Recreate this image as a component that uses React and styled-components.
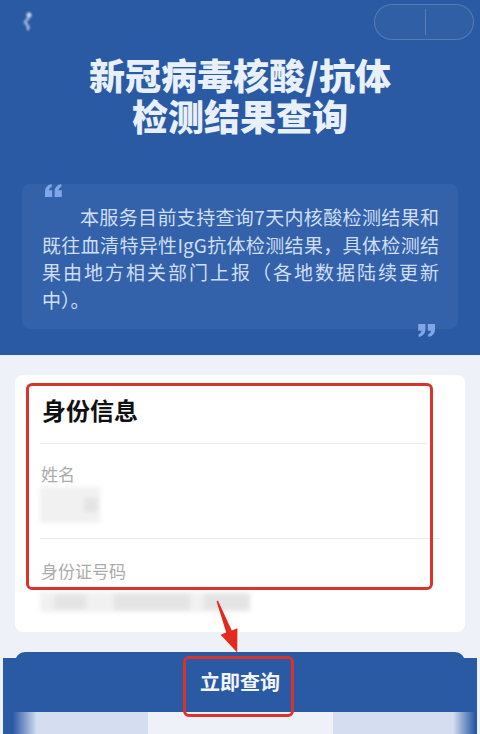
import React from "react";
import styled, { createGlobalStyle } from "styled-components";

const GlobalStyle = createGlobalStyle`
  html, body { margin: 0; padding: 0; }
  body {
    width: 480px;
    height: 734px;
    overflow: hidden;
    background: #eef2f8;
    font-family: "Noto Sans CJK SC", "Noto Sans", sans-serif;
  }
`;

const Page = styled.div`
  position: relative;
  width: 480px;
  height: 734px;
  overflow: hidden;
  background: #eef2f8;
`;

const Header = styled.header`
  background: #2b5aa4;
  height: 355px;
  padding: 0 22px;
  box-sizing: border-box;
  display: flex;
  flex-direction: column;
`;

const TopBar = styled.div`
  height: 44px;
  display: flex;
  align-items: center;
  justify-content: space-between;
  margin-right: -16px;
`;

const Back = styled.div`
  width: 12px;
  height: 22px;
  filter: blur(1.2px);
  opacity: 0.8;
  margin-top: -2px;
`;

const Capsule = styled.div`
  width: 100px;
  height: 36px;
  box-sizing: border-box;
  border-radius: 18px;
  border: 1px solid rgba(255, 255, 255, 0.18);
  background: rgba(255, 255, 255, 0.03);
  display: flex;
  align-items: center;
  justify-content: center;
  padding-left: 2px;
`;

const CapsuleDivider = styled.span`
  width: 1px;
  height: 26px;
  background: rgba(255, 255, 255, 0.2);
`;

const Title = styled.h1`
  margin: 10px 0 0;
  color: #e8f0fb;
  font-size: 36px;
  line-height: 41px;
  font-weight: 900;
  text-align: center;
`;

const QuoteBox = styled.div`
  position: relative;
  margin-top: 48px;
  height: 145px;
  box-sizing: border-box;
  padding: 19px 19px 0 20px;
  border-radius: 8px;
  background: #3362ab;
`;

const QuoteIcon = styled.svg`
  position: absolute;
  ${(p) =>
    p.$end
      ? "left: 395px; top: 139px; transform: rotate(180deg);"
      : "left: 23px; top: 0px;"}
`;

const QuoteText = styled.p`
  margin: 0;
  color: #d0def3;
  font-size: 19px;
  line-height: 27.5px;
  text-align: justify;
  text-indent: 2em;
`;

const Body = styled.main`
  padding: 20px 15px 0;
`;

const Card = styled.section`
  position: relative;
  background: #ffffff;
  border-radius: 8px;
  height: 257px;
  padding: 0 25px 0 25px;
  box-sizing: border-box;
`;

const CardTitle = styled.h2`
  margin: 0 13px 0 0;
  height: 68px;
  display: flex;
  align-items: center;
  padding-left: 2px;
  font-size: 24px;
  font-weight: 700;
  color: #111;
  border-bottom: 1px solid #ececec;
`;

const Field = styled.div`
  padding-top: ${(p) => p.$top}px;
  height: ${(p) => p.$h}px;
  box-sizing: border-box;
  border-bottom: ${(p) => (p.$line ? "1px solid #ececec" : "none")};
`;

const Label = styled.div`
  font-size: 17px;
  line-height: 22px;
  color: #ababab;
  padding-left: 1px;
`;

const Blur = styled.div`
  display: flex;
  margin-top: ${(p) => p.$mt}px;
  height: ${(p) => p.$h}px;
  width: ${(p) => p.$w}px;
  background: #f1f1f1;
  filter: blur(2px);
  align-items: center;
`;

const BlurPiece = styled.span`
  height: ${(p) => p.$h}px;
  width: ${(p) => p.$w}px;
  margin-left: ${(p) => p.$ml}px;
  background: #e4e4e4;
`;

const RedFrame = styled.div`
  position: absolute;
  box-sizing: border-box;
  border: 3px solid #d8342b;
  border-radius: 6px;
  left: ${(p) => p.$x}px;
  top: ${(p) => p.$y}px;
  width: ${(p) => p.$w}px;
  height: ${(p) => p.$h}px;
  pointer-events: none;
`;

const Footer = styled.footer`
  margin: 20px 3px 0;
  padding: 0 12px;
  background: linear-gradient(to bottom, transparent 6px, #2b5aa4 6px);
`;

const Button = styled.button`
  display: flex;
  width: 100%;
  height: 60px;
  align-items: center;
  justify-content: center;
  border: none;
  border-radius: 10px 10px 0 0;
  background: #2b5aa4;
  color: #f2f6fc;
  font-family: "Noto Sans CJK SC", sans-serif;
  font-size: 20px;
  font-weight: 700;
  padding: 0 0 1px;
`;

const BottomStrip = styled.div`
  height: 22px;
  margin: 0 -12px;
  background: linear-gradient(
    to right,
    #2b5aa4 0px,
    #2b5aa4 10px,
    #d4def0 34px,
    #d4def0 145px,
    #eef2f8 145px,
    #eef2f8 330px,
    #d4def0 330px,
    #d4def0 450px,
    #2b5aa4 472px
  );
`;

const ArrowSvg = styled.svg`
  position: absolute;
  left: 0;
  top: 0;
  pointer-events: none;
`;

function Quote({ end }) {
  const d =
    "M0 13 L0 7.5 Q0 1.5 6.5 0 L7 2.6 Q4.2 3.6 3.8 6.2 L7.2 6.2 L7.2 13 Z";
  return (
    <QuoteIcon $end={end} width="18" height="14" viewBox="0 0 18 14">
      <path d={d} fill="#7fa7e8" />
      <path d={d} fill="#7fa7e8" transform="translate(9.6 0)" />
    </QuoteIcon>
  );
}

export default function App() {
  return (
    <Page>
      <GlobalStyle />
      <Header>
        <TopBar>
          <Back>
            <svg width="12" height="22" viewBox="0 0 12 22">
              <circle cx="7" cy="5" r="2.5" fill="#fff" />
              <path d="M8 6 L3 12 L7 18" stroke="#c9d6f0" strokeWidth="2.5" fill="none" />
              <circle cx="6" cy="19" r="1.2" fill="#fff" />
            </svg>
          </Back>
          <Capsule>
            <CapsuleDivider />
          </Capsule>
        </TopBar>
        <Title>
          新冠病毒核酸/抗体
          <br />
          检测结果查询
        </Title>
        <QuoteBox>
          <Quote />
          <QuoteText>
            本服务目前支持查询7天内核酸检测结果和既往血清特异性IgG抗体检测结果，具体检测结果由地方相关部门上报（各地数据陆续更新中）。
          </QuoteText>
          <Quote end />
        </QuoteBox>
      </Header>
      <Body>
        <Card>
          <CardTitle>身份信息</CardTitle>
          <Field $top={19} $h={95} $line>
            <Label>姓名</Label>
            <Blur $mt={2} $h={36} $w={60}>
              <BlurPiece $w={14} $h={14} $ml={44} />
            </Blur>
          </Field>
          <Field $top={21} $h={93}>
            <Label>身份证号码</Label>
            <Blur $mt={10} $h={20} $w={210}>
              <BlurPiece $w={32} $h={14} $ml={14} />
              <BlurPiece $w={76} $h={16} $ml={28} />
              <BlurPiece $w={46} $h={16} $ml={14} />
            </Blur>
          </Field>
        </Card>
        <RedFrame $x={26} $y={383} $w={407} $h={207} />
      </Body>
      <Footer>
        <Button type="button">立即查询</Button>
        <BottomStrip />
      </Footer>
      <RedFrame $x={183} $y={656} $w={111} $h={61} />
      <ArrowSvg width="480" height="734" viewBox="0 0 480 734">
        <polygon
          points="217.9,600.6 231.8,630.4 237.4,628.2 237.2,652.5 220.6,634.8 226.2,632.6 216.6,601.4"
          fill="#e42a1e"
        />
      </ArrowSvg>
    </Page>
  );
}
